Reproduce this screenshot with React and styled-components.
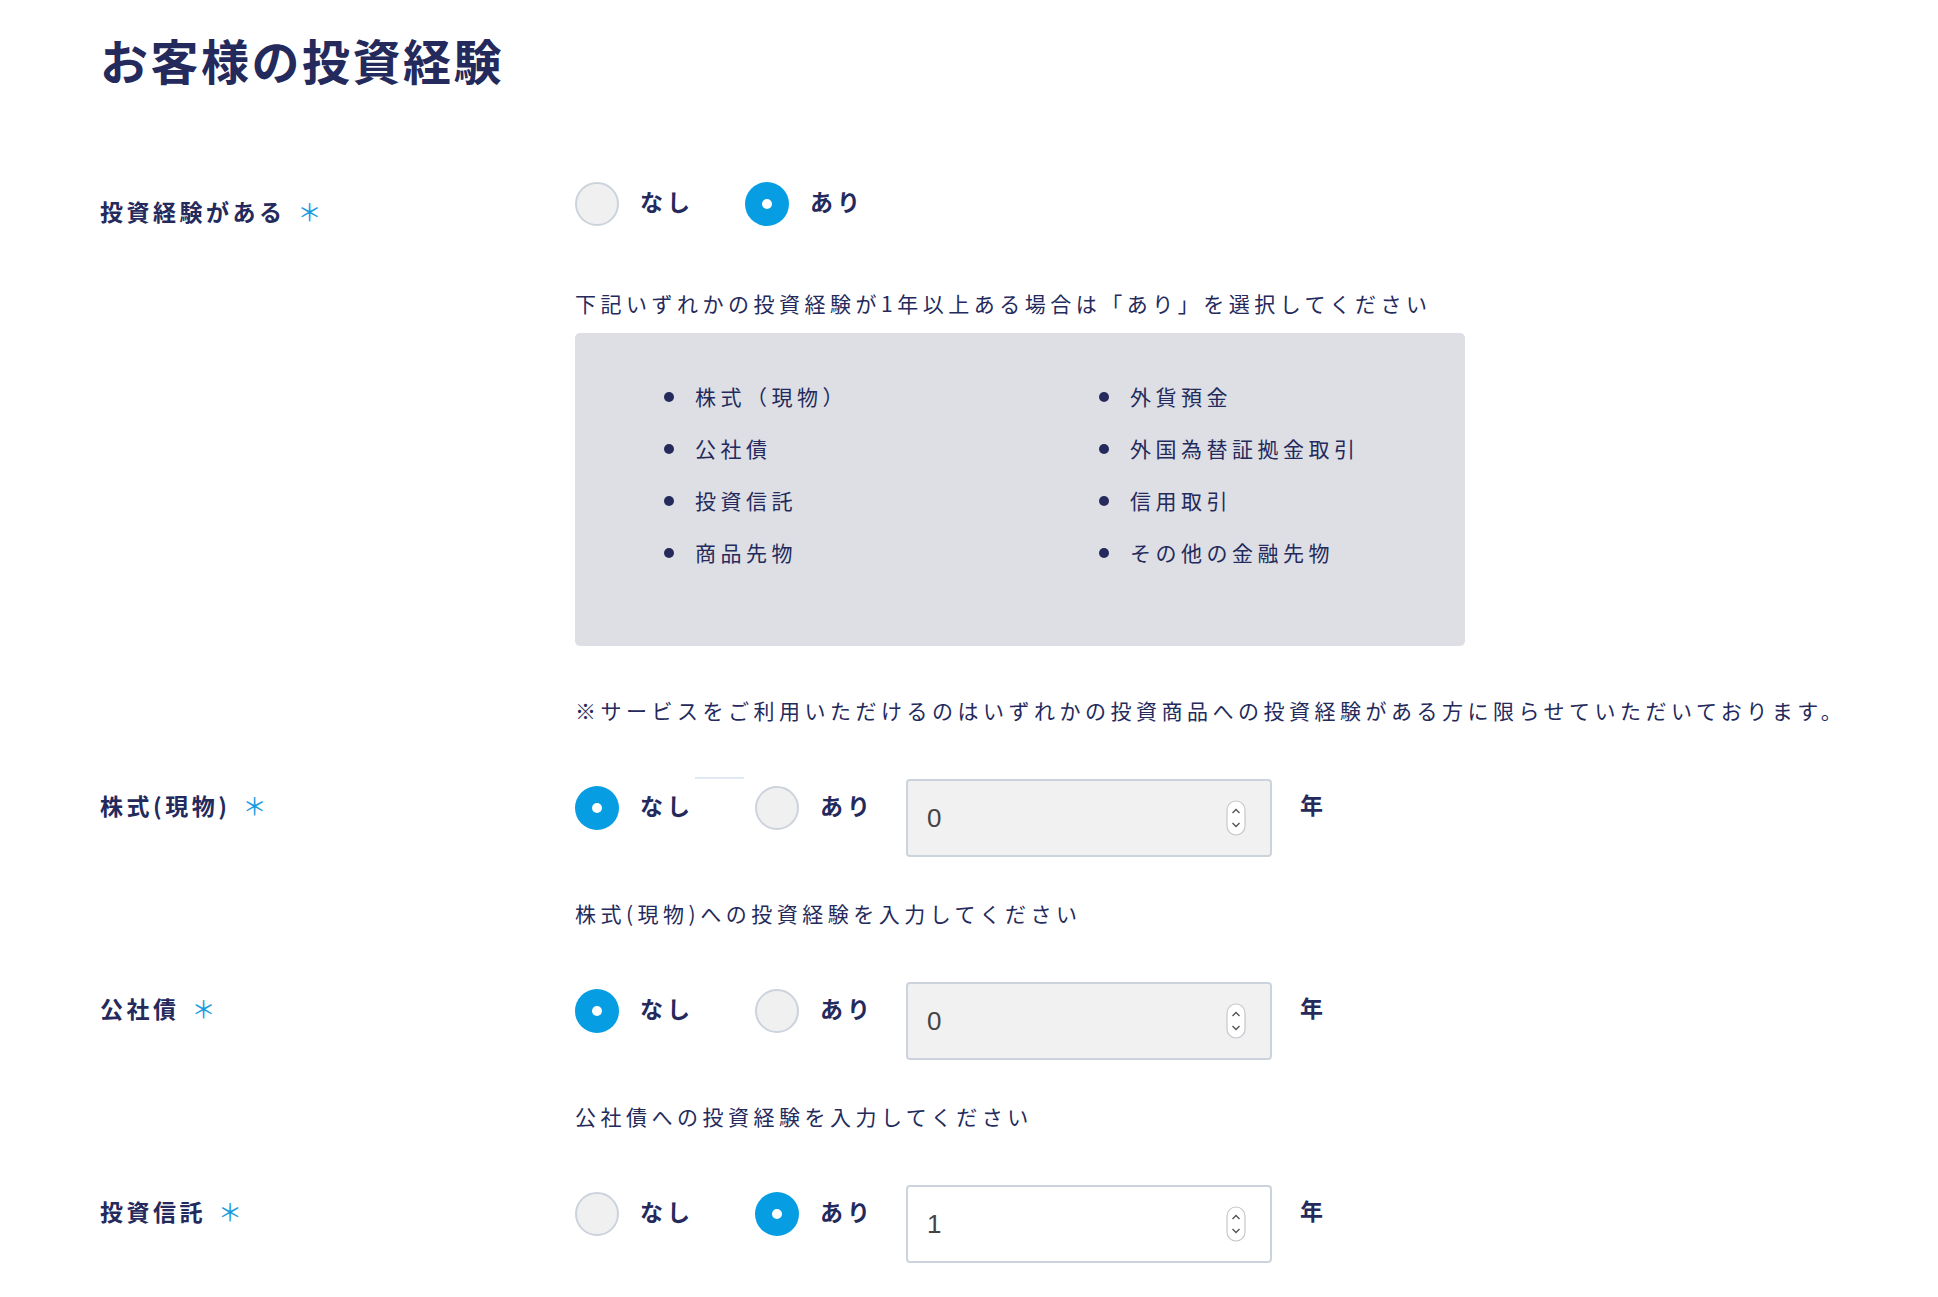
import styled, { createGlobalStyle } from 'styled-components';

const navy = '#242a5c';
const blue = '#069de3';

const GlobalStyle = createGlobalStyle`
  body {
    margin: 0;
    background: #fff;
    font-family: "Noto Sans CJK JP", "Noto Sans", sans-serif;
    color: ${navy};
  }
`;

const experiences = [
  '株式（現物）',
  '公社債',
  '投資信託',
  '商品先物',
  '外貨預金',
  '外国為替証拠金取引',
  '信用取引',
  'その他の金融先物',
];

const yearRows = [
  { label: '株式(現物)', has: false, years: 0, desc: '株式(現物)への投資経験を入力してください', mark: true },
  { label: '公社債', has: false, years: 0, desc: '公社債への投資経験を入力してください' },
  { label: '投資信託', has: true, years: 1 },
];

const Spinner = () => (
  <svg width="20" height="36" viewBox="0 0 20 36">
    <rect x="1" y="1" width="18" height="34" rx="9" fill="#fff" stroke="#c4c7cc" strokeWidth="1.2" />
    <path d="M6.5 13 L10 9.5 L13.5 13" fill="none" stroke="#555" strokeWidth="1.4" />
    <path d="M6.5 23 L10 26.5 L13.5 23" fill="none" stroke="#555" strokeWidth="1.4" />
  </svg>
);

const RadioPair = ({ has, top, space }) => (
  <Options $top={top}>
    <Option $space={space}>
      <Circle $checked={!has} />
      <OptionText>なし</OptionText>
    </Option>
    <Option $space={0}>
      <Circle $checked={has} />
      <OptionText>あり</OptionText>
    </Option>
  </Options>
);

const App = () => {
  return (
    <Page>
      <GlobalStyle />
      <Title>お客様の投資経験</Title>
      <Form>
        <Row>
          <Label $offset={14}>
            投資経験がある<Required>＊</Required>
          </Label>
          <Content>
            <RadioPair has top={0} space={51} />
            <Hint $top={64}>下記いずれかの投資経験が1年以上ある場合は「あり」を選択してください</Hint>
            <InfoBox>
              {experiences.map((item) => (
                <Item key={item}>{item}</Item>
              ))}
            </InfoBox>
            <Hint $top={51}>
              ※サービスをご利用いただけるのはいずれかの投資商品への投資経験がある方に限らせていただいております。
            </Hint>
          </Content>
        </Row>
        {yearRows.map((row) => (
          <Row key={row.label}>
            <Label $offset={11}>
              {row.label}
              <Required>＊</Required>
            </Label>
            <Content>
              <Controls>
                {row.mark && <FocusMark />}
                <RadioPair has={row.has} top={7} space={61} />
                <NumberField $disabled={!row.has}>
                  <span>{row.years}</span>
                  <Spinner />
                </NumberField>
                <Unit>年</Unit>
              </Controls>
              {row.desc && <Hint $top={43}>{row.desc}</Hint>}
            </Content>
          </Row>
        ))}
      </Form>
    </Page>
  );
};

const Page = styled.main`
  padding: 31px 0 0 100px;
`;

const Title = styled.h1`
  margin: 0 0 95px;
  font-size: 48px;
  line-height: 56px;
  font-weight: 700;
  letter-spacing: 2.5px;
  color: ${navy};
`;

const Form = styled.div`
  display: flex;
  flex-direction: column;
  gap: 52px;
`;

const Row = styled.div`
  display: grid;
  grid-template-columns: 475px 1fr;
`;

const Label = styled.div`
  display: flex;
  align-items: center;
  align-self: start;
  padding-top: ${(p) => p.$offset}px;
  font-size: 23px;
  line-height: 30px;
  font-weight: 700;
  letter-spacing: 3.5px;
  color: ${navy};
`;

const Required = styled.span`
  margin-left: 12px;
  color: #1a9be0;
  font-size: 24px;
  font-weight: 400;
  letter-spacing: 0;
`;

const Content = styled.div`
  display: flex;
  flex-direction: column;
  align-items: flex-start;
`;

const Options = styled.div`
  display: flex;
  align-items: center;
  margin-top: ${(p) => p.$top}px;
`;

const Option = styled.label`
  display: flex;
  align-items: center;
  gap: 21px;
  margin-right: ${(p) => p.$space}px;
`;

const Circle = styled.span`
  position: relative;
  width: 44px;
  height: 44px;
  box-sizing: border-box;
  border-radius: 50%;
  background: ${(p) => (p.$checked ? blue : '#f0f0f0')};
  border: ${(p) => (p.$checked ? 'none' : '2px solid #cdd3dc')};

  &::after {
    content: '';
    display: ${(p) => (p.$checked ? 'block' : 'none')};
    position: absolute;
    top: 17px;
    left: 17px;
    width: 10px;
    height: 10px;
    border-radius: 50%;
    background: #fff;
  }
`;

const OptionText = styled.span`
  padding-bottom: 7px;
  font-size: 23px;
  line-height: 30px;
  font-weight: 700;
  letter-spacing: 4px;
  color: ${navy};
`;

const Hint = styled.p`
  margin: ${(p) => p.$top}px 0 0;
  padding-bottom: 4px;
  font-size: 21px;
  line-height: 26px;
  font-weight: 400;
  letter-spacing: 4.5px;
  white-space: nowrap;
  color: ${navy};
`;

const InfoBox = styled.div`
  margin-top: 13px;
  width: 890px;
  height: 313px;
  box-sizing: border-box;
  padding: 48px 0 0 89px;
  background: #dddfe4;
  border-radius: 5px;
  display: grid;
  grid-template-columns: 435px 1fr;
  grid-template-rows: repeat(4, 30px);
  grid-auto-flow: column;
  row-gap: 22px;
`;

const Item = styled.div`
  display: flex;
  align-items: center;
  font-size: 21px;
  line-height: 30px;
  letter-spacing: 4.5px;
  color: ${navy};

  &::before {
    content: '';
    width: 10px;
    height: 10px;
    border-radius: 50%;
    background: ${navy};
    margin: 2px 21px 0 0;
  }
`;

const Controls = styled.div`
  position: relative;
  display: flex;
  align-items: flex-start;
`;

const FocusMark = styled.span`
  position: absolute;
  top: -2px;
  left: 120px;
  width: 49px;
  height: 2px;
  background: #e1eaf2;
`;

const NumberField = styled.div`
  margin-left: 32px;
  width: 366px;
  height: 78px;
  box-sizing: border-box;
  padding: 0 24px 0 19px;
  display: flex;
  align-items: center;
  justify-content: space-between;
  border: 2px solid #cdd3dc;
  border-radius: 4px;
  background: ${(p) => (p.$disabled ? '#f1f1f1' : '#fff')};
  font-family: "Liberation Sans", Arial, sans-serif;
  font-size: 26px;
  color: #444;
`;

const Unit = styled.span`
  margin-left: 28px;
  padding-top: 10px;
  font-size: 23px;
  line-height: 30px;
  font-weight: 700;
  color: ${navy};
`;

export default App;
